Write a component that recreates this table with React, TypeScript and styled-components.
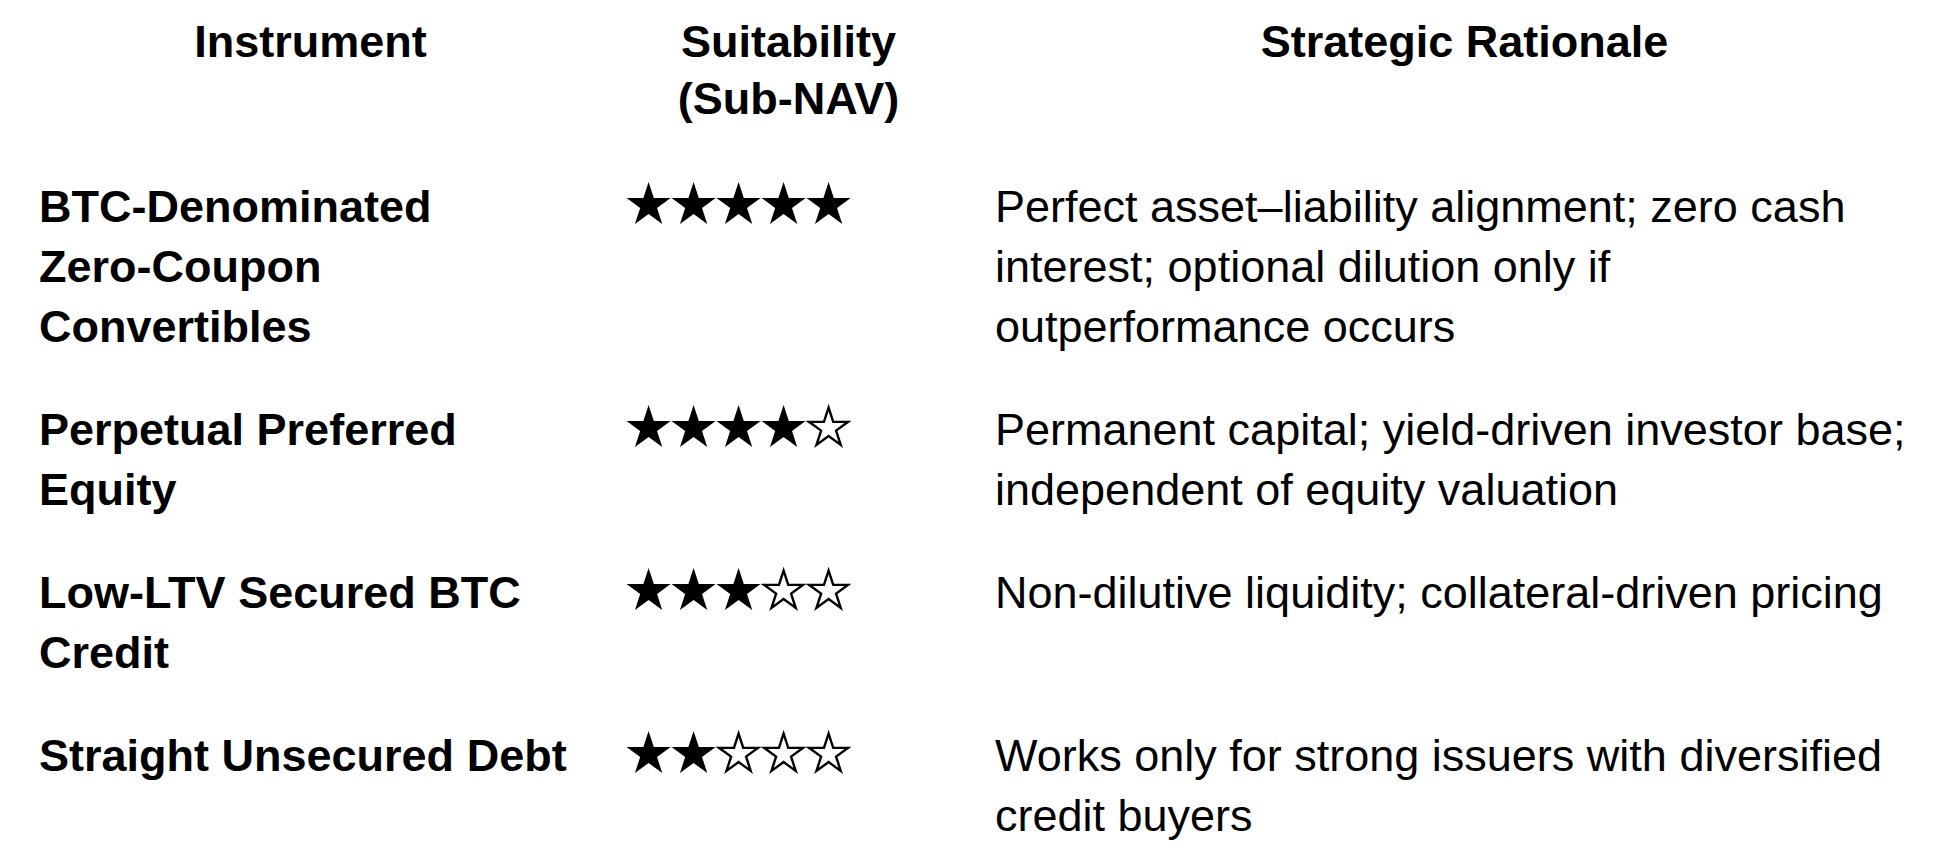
import React from 'react';
import styled, { createGlobalStyle } from 'styled-components';

interface Row {
  instrument: string;
  rating: number;
  rationale: string;
}

const rows: Row[] = [
  {
    instrument: 'BTC-Denominated Zero-Coupon Convertibles',
    rating: 5,
    rationale:
      'Perfect asset–liability alignment; zero cash interest; optional dilution only if outperformance occurs',
  },
  {
    instrument: 'Perpetual Preferred Equity',
    rating: 4,
    rationale: 'Permanent capital; yield-driven investor base; independent of equity valuation',
  },
  {
    instrument: 'Low-LTV Secured BTC Credit',
    rating: 3,
    rationale: 'Non-dilutive liquidity; collateral-driven pricing',
  },
  {
    instrument: 'Straight Unsecured Debt',
    rating: 2,
    rationale: 'Works only for strong issuers with diversified credit buyers',
  },
];

// 5-point star polygon inside a 45x45 box
function starPoints(R: number, cx = 22.5, cy = 24.2) {
  const r = R * 0.382;
  const pts: string[] = [];
  for (let i = 0; i < 10; i++) {
    const a = ((-90 + i * 36) * Math.PI) / 180;
    const rad = i % 2 === 0 ? R : r;
    pts.push(`${(cx + rad * Math.cos(a)).toFixed(2)},${(cy + rad * Math.sin(a)).toFixed(2)}`);
  }
  return pts.join(' ');
}

const FULL = starPoints(23.2);
const EMPTY = starPoints(20.6);

function Rating({ value }: { value: number }) {
  return (
    <StarRow aria-label={`${value} of 5`}>
      {[0, 1, 2, 3, 4].map((i) => (
        <Star key={i} viewBox="0 0 45 45">
          {i < value ? (
            <polygon points={FULL} fill="#000" />
          ) : (
            <polygon points={EMPTY} fill="none" stroke="#000" strokeWidth={2.4} strokeLinejoin="miter" />
          )}
        </Star>
      ))}
    </StarRow>
  );
}

// words with a hyphen stay whole, lines only break at spaces
function Words({ text }: { text: string }) {
  const words = text.split(' ');
  return (
    <>
      {words.map((w, i) => (
        <React.Fragment key={i}>
          <Word>{w}</Word>
          {i < words.length - 1 ? ' ' : null}
        </React.Fragment>
      ))}
    </>
  );
}

function App() {
  return (
    <>
      <GlobalStyle />
      <Table>
        <colgroup>
          <Col $width={583} />
          <Col $width={373} />
          <Col $width={959} />
        </colgroup>
        <thead>
          <tr>
            <HeadCell>Instrument</HeadCell>
            <HeadCell>Suitability (Sub-NAV)</HeadCell>
            <HeadCell $last>Strategic Rationale</HeadCell>
          </tr>
        </thead>
        <tbody>
          {rows.map((row) => (
            <tr key={row.instrument}>
              <Cell $strong>
                <Words text={row.instrument} />
              </Cell>
              <Cell>
                <Rating value={row.rating} />
              </Cell>
              <Cell $last>{row.rationale}</Cell>
            </tr>
          ))}
        </tbody>
      </Table>
    </>
  );
}

const GlobalStyle = createGlobalStyle`
  html, body {
    margin: 0;
    padding: 0;
    background: #fff;
    overflow: hidden;
  }
  body {
    font-family: "Liberation Sans", Arial, Helvetica, sans-serif;
    color: #000;
  }
`;

const Table = styled.table`
  width: 1915px;
  margin-left: 19px;
  border-collapse: collapse;
  table-layout: fixed;
  font-size: 45px;
`;

const Col = styled.col<{ $width: number }>`
  width: ${({ $width }) => $width}px;
`;

const HeadCell = styled.th<{ $last?: boolean }>`
  padding: 13.4px ${({ $last }) => ($last ? '0' : '20px')} 28.5px 20px;
  font-weight: 700;
  line-height: 57px;
  text-align: center;
  vertical-align: top;
`;

const Cell = styled.td<{ $strong?: boolean; $last?: boolean }>`
  padding: 21.5px ${({ $last }) => ($last ? '0' : '20px')} 21.5px 20px;
  font-weight: ${({ $strong }) => ($strong ? 700 : 400)};
  line-height: 60px;
  text-align: left;
  vertical-align: top;
`;

const Word = styled.span`
  white-space: nowrap;
`;

const StarRow = styled.div`
  display: flex;
  height: 60px;
  padding-top: 3.6px;
  padding-left: 3.5px;
  box-sizing: border-box;
`;

const Star = styled.svg`
  width: 45.2px;
  height: 45px;
  flex: none;
  display: block;
`;

export default App;
